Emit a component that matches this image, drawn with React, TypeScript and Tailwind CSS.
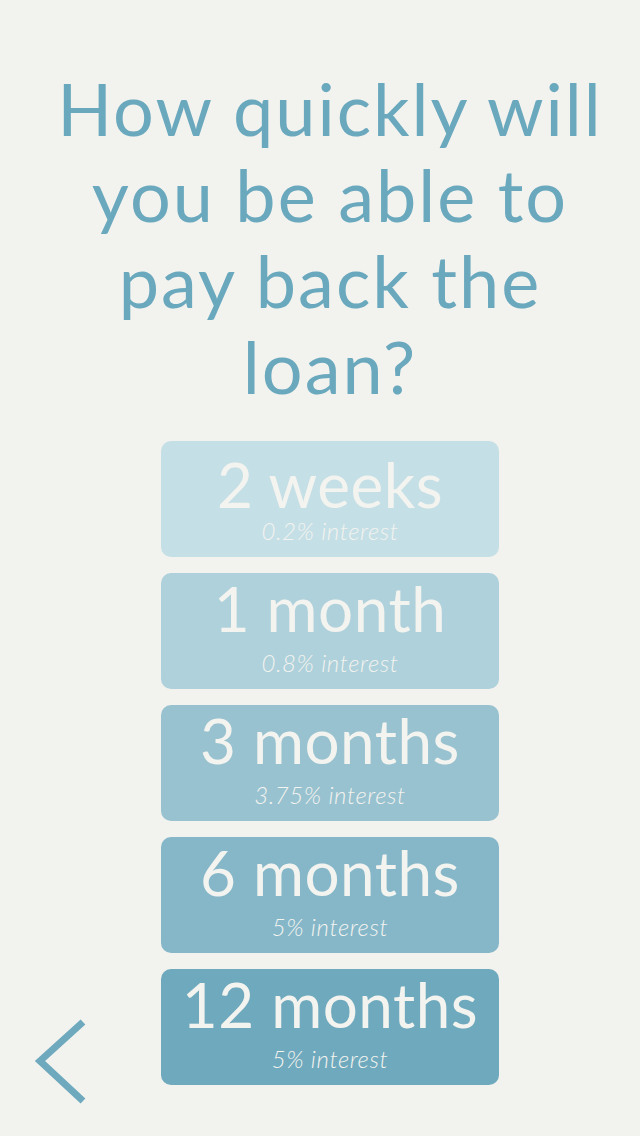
const OPTIONS = [
  { label: "2 weeks", rate: "0.2% interest", bg: "bg-[#c5dfe6]", titleClass: "pt-[13px]", subClass: "mt-[4px]" },
  { label: "1 month", rate: "0.8% interest", bg: "bg-[#aed1db]", titleClass: "pt-[5px]", subClass: "mt-[12px]" },
  { label: "3 months", rate: "3.75% interest", bg: "bg-[#98c2cf]", titleClass: "pt-[5px]", subClass: "mt-[12px]" },
  { label: "6 months", rate: "5% interest", bg: "bg-[#85b7c9]", titleClass: "pt-[5px]", subClass: "mt-[12px]" },
  { label: "12 months", rate: "5% interest", bg: "bg-[#6ea9bd]", titleClass: "pt-[5px]", subClass: "mt-[12px]" },
];

export default function App() {
  return (
    <div
      className="relative min-h-screen w-full bg-[#f2f2ee] pl-[20px] text-center"
      style={{ fontFamily: "Lato, 'Open Sans', sans-serif" }}
    >
      <h1 className="mx-auto w-[600px] pt-[65px] text-[72px] font-normal leading-[86px] tracking-[2px] text-[#6aa8bd]">
        How quickly will
        <br />
        you be able to
        <br />
        pay back the
        <br />
        loan?
      </h1>

      <div className="mx-auto mt-[32px] flex w-[338px] flex-col gap-[16px]">
        {OPTIONS.map((opt) => (
          <button
            key={opt.label}
            className={`flex h-[116px] w-full flex-col items-center rounded-[10px] ${opt.bg} text-[#f3f3ef]`}
          >
            <div className={`${opt.titleClass} text-[62px] font-normal leading-[60px] tracking-[0.5px]`}>
              {opt.label}
            </div>
            <div className={`${opt.subClass} text-[24px] font-light italic leading-[26px] tracking-[0.6px]`}>
              {opt.rate}
            </div>
          </button>
        ))}
      </div>

      {/* back button */}
      <button className="absolute left-[30px] top-[1012px]" aria-label="Back">
        <svg width="64" height="100" viewBox="0 0 64 100">
          <polyline
            points="53,10 10,49 53,89"
            fill="none"
            stroke="#6ea9bd"
            strokeWidth="7"
          />
        </svg>
      </button>
    </div>
  );
}
